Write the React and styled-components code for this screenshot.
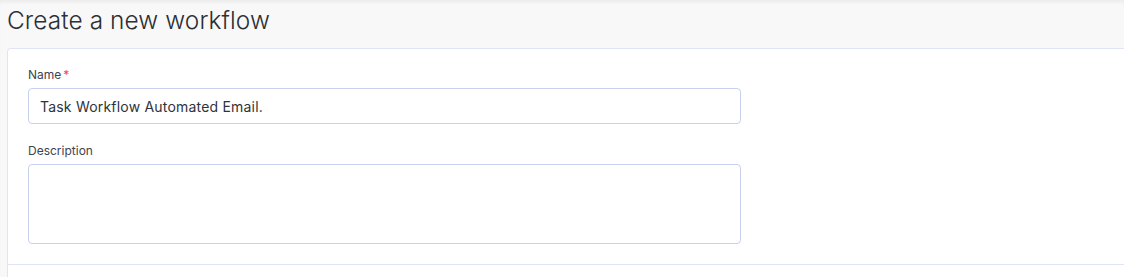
import React from 'react'
import styled, { createGlobalStyle } from 'styled-components'

const GlobalStyle = createGlobalStyle`
  html, body {
    margin: 0;
    padding: 0;
    background: #f8f8f8;
    font-family: Inter, "Noto Sans", "Liberation Sans", sans-serif;
  }
`

const Page = styled.div`
  min-height: 277px;
  background: #f8f8f8;
  box-shadow: inset 0 4px 4px -2px rgba(0, 0, 0, 0.06);
  padding-left: 7px;
  overflow: hidden;
`

const Title = styled.h1`
  margin: 0;
  height: 48px;
  font-size: 24.4px;
  line-height: 40px;
  font-weight: 300;
  color: #2b2f36;
  letter-spacing: 0.1px;
`

const Card = styled.div`
  background: #fff;
  border: 1px solid #e1e4f6;
  border-right: none;
  border-radius: 4px 0 0 0;
  min-height: 240px;
`

const CardBody = styled.div`
  padding: 17px 20px 20px 20px;
  border-bottom: 1px solid #e1e4f6;
`

const Field = styled.div`
  & + & {
    margin-top: 18px;
  }
`

const Label = styled.label`
  display: block;
  font-size: 12px;
  line-height: 18px;
  color: #3e4450;
  margin-bottom: 4px;

  span {
    color: #e5484d;
    margin-left: 2px;
  }
`

const Input = styled.input`
  box-sizing: border-box;
  width: 713px;
  height: 36px;
  border: 1px solid #c7d0ef;
  border-radius: 4px;
  padding: 0 11px;
  font-family: inherit;
  font-size: 14px;
  letter-spacing: 0.2px;
  color: #2f333a;
  background: #fff;
  outline: none;
`

const TextArea = styled.textarea`
  box-sizing: border-box;
  display: block;
  width: 713px;
  height: 80px;
  border: 1px solid #c7d0ef;
  border-radius: 4px;
  padding: 8px 11px;
  font-family: inherit;
  font-size: 14px;
  resize: none;
  outline: none;
`

export default function App() {
  return (
    <>
      <GlobalStyle />
      <Page>
        <Title>Create a new workflow</Title>
        <Card>
          <CardBody>
            <Field>
              <Label>Name<span>*</span></Label>
              <Input defaultValue="Task Workflow Automated Email." />
            </Field>
            <Field>
              <Label>Description</Label>
              <TextArea />
            </Field>
          </CardBody>
        </Card>
      </Page>
    </>
  )
}
